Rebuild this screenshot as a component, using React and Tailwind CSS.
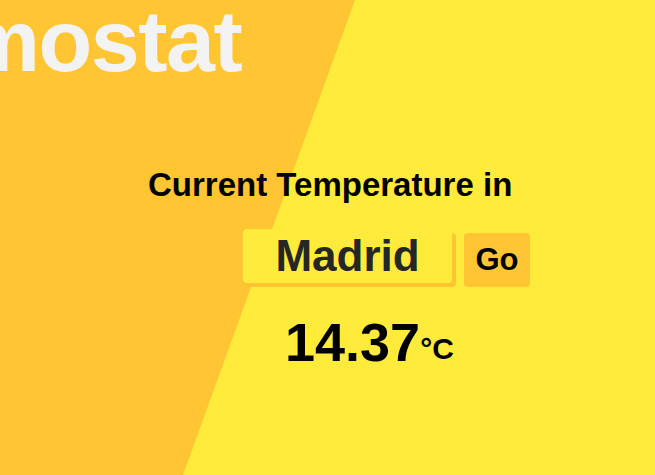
import { useState } from 'react'

export default function App() {
  const [city, setCity] = useState('Madrid')

  return (
    <div className="relative h-[475px] w-full overflow-hidden bg-[#ffeb3b] font-['Liberation_Sans',Arial,sans-serif]">
      {/* diagonal backdrop */}
      <svg className="absolute inset-0 h-full w-full" viewBox="0 0 655 475" preserveAspectRatio="none">
        <polygon points="0,0 355,0 183,475 0,475" fill="#ffc533" />
      </svg>

      <div className="relative flex flex-col items-start">
        <h1 className="-ml-[223px] -mt-[3px] whitespace-nowrap text-[88px] font-bold leading-none tracking-[-1.5px] text-[#f3f3f3]">
          Thermostat
        </h1>

        <h2 className="ml-[148px] mt-[83px] whitespace-nowrap text-[33px] font-bold leading-none text-black">
          Current Temperature in
        </h2>

        <div className="ml-[243px] mt-[28px] flex items-start gap-3">
          <input
            value={city}
            onChange={(e) => setCity(e.target.value)}
            className="h-[54px] w-[209px] rounded-[4px] bg-[#ffeb3b] text-center text-[44px] font-bold text-[#262626] shadow-[4px_4px_0_#ffc533] outline-none"
          />
          <button className="mt-[4px] h-[54px] w-[66px] rounded-[4px] bg-[#ffc533] text-[31px] font-bold text-black">
            Go
          </button>
        </div>

        <div className="ml-[285px] mt-[28px] whitespace-nowrap font-bold leading-none text-black">
          <span className="text-[54px]">14.37</span>
          <span className="align-[2px] text-[30px]">°C</span>
        </div>
      </div>
    </div>
  )
}
